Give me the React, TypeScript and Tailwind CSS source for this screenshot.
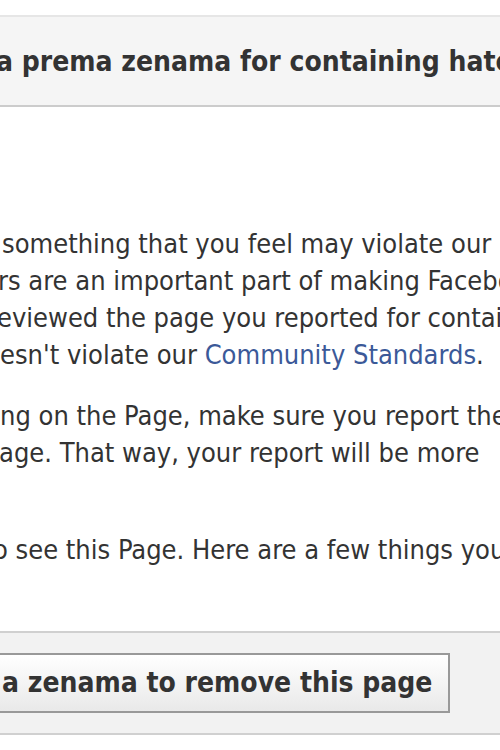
const body = "text-[27px] leading-[37px] text-[#333333] whitespace-nowrap";

function Line({ text, shift }: { text: React.ReactNode; shift: string }) {
  return <div className={`${body} ${shift}`}>{text}</div>;
}

export default function App() {
  return (
    <div
      className="w-[500px] h-[750px] overflow-hidden bg-white"
      style={{ fontFamily: '"DejaVu Sans Condensed", "DejaVu Sans", Tahoma, sans-serif' }}
    >
      <div className="h-[15px]" />
      <div className="border-t-2 border-[#e6e6e6] border-b-2 border-b-[#cccccc] bg-[#f5f5f5] h-[92px] flex items-center">
        <div className="-ml-[4px] pt-[2px] whitespace-nowrap text-[28px] font-bold text-[#333333]">
          a prema zenama for containing hate speech or symbols
        </div>
      </div>

      <div className="pt-[118px]">
        <Line shift="ml-[2px]" text="something that you feel may violate our" />
        <Line shift="-ml-[2px]" text="rs are an important part of making Facebook a safe place" />
        <Line shift="-ml-[3px]" text="eviewed the page you reported for containing hate speech" />
        <Line
          shift="ml-0"
          text={
            <>
              esn't violate our <span className="text-[#3b5998]">Community Standards</span>.
            </>
          }
        />
      </div>

      <div className="pt-[24px]">
        <Line shift="ml-0" text="ng on the Page, make sure you report the specific" />
        <Line shift="-ml-[1px]" text="age. That way, your report will be more" />
      </div>

      <div className="pt-[60px]">
        <Line shift="-ml-[7px]" text="o see this Page. Here are a few things you can do:" />
      </div>

      <div className="mt-[63px] border-t-2 border-[#d0d0d0] border-b-2 border-b-[#d0d0d0] bg-[#f2f2f2] h-[104px] flex items-center">
        <button className="-ml-[40px] h-[60px] pl-[40px] pr-[16px] border-2 border-[#999999] bg-gradient-to-b from-[#ffffff] to-[#e9e9e9] whitespace-nowrap text-[28px] font-bold text-[#333333]">
          a zenama to remove this page
        </button>
      </div>
    </div>
  );
}
